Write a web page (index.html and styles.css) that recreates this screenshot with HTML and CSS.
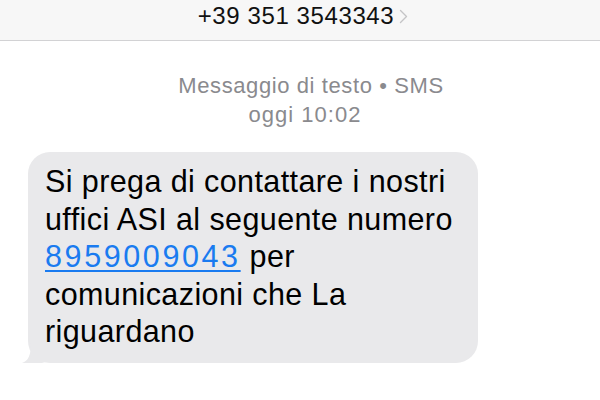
FILE: index.html
```html
<!DOCTYPE html>
<html lang="it">
<head>
<meta charset="utf-8">
<title>SMS</title>
<link rel="stylesheet" href="styles.css">
</head>
<body>
<header class="topbar">
  <span class="contact">+39 351 3543343</span>
  <svg class="chev" width="9" height="15" viewBox="0 0 9 15"><path d="M1.5 1.5 L7.5 7.5 L1.5 13.5" fill="none" stroke="#c4c4c6" stroke-width="1.4" stroke-linecap="round" stroke-linejoin="round"/></svg>
</header>
<main class="thread">
  <div class="meta">
    <div>Messaggio di testo • SMS</div>
    <div class="time">oggi 10:02</div>
  </div>
  <div class="row">
    <div class="bubble">
      Si prega di contattare i nostri uffici ASI al seguente numero <a class="link" href="#">8959009043</a> per comunicazioni che La riguardano
      <svg class="tail" width="24" height="22" viewBox="0 0 24 22"><path d="M24 0 L24 20 C18 22 8 22 0 21 C6 19 9 14 9 0 Z" fill="#e9e9eb"/></svg>
    </div>
  </div>
</main>
</body>
</html>
```
FILE: styles.css
```css
html, body {
  margin: 0;
  padding: 0;
  background: #ffffff;
  font-family: "Liberation Sans", Arial, sans-serif;
}
.topbar {
  height: 41px;
  box-sizing: border-box;
  background: #f7f7f7;
  border-bottom: 1px solid #d2d2d4;
  display: flex;
  justify-content: center;
  align-items: flex-start;
  gap: 5px;
  padding-left: 6px;
}
.contact {
  font-size: 24px;
  line-height: 31px;
  letter-spacing: 0.6px;
  color: #111;
}
.chev {
  margin-top: 9px;
}
.thread {
  padding-top: 30px;
}
.meta {
  text-align: center;
  color: #8a8a8e;
  font-size: 22px;
  line-height: 29px;
  letter-spacing: 0.6px;
  padding-left: 22px;
}
.time {
  letter-spacing: 1px;
  margin-right: 12px;
}
.row {
  padding: 23px 0 0 28px;
}
.bubble {
  position: relative;
  width: 450px;
  box-sizing: border-box;
  background: #e9e9eb;
  border-radius: 22px;
  padding: 11px 16px 12px 17px;
  font-size: 30.5px;
  line-height: 37.5px;
  letter-spacing: 0.4px;
  color: #000;
}
.link {
  color: #1a7bf0;
  letter-spacing: 2.6px;
  text-decoration: underline;
  text-decoration-thickness: 1.5px;
  text-underline-offset: 3px;
}
.tail {
  position: absolute;
  left: -6px;
  bottom: -1px;
}
```
